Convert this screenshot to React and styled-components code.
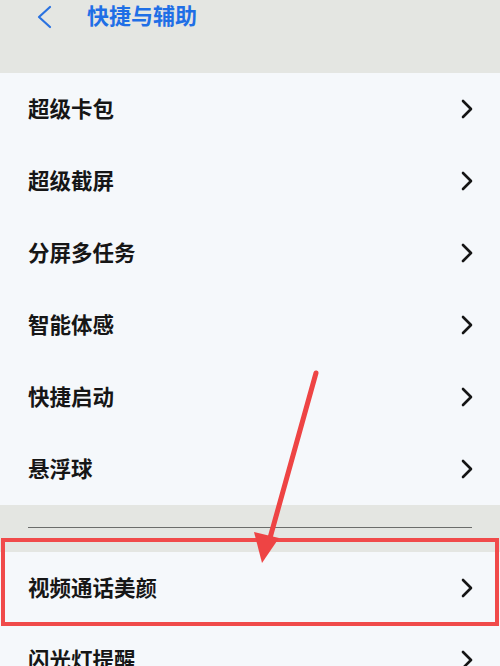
import React from "react";
import styled, { createGlobalStyle } from "styled-components";

const GlobalStyle = createGlobalStyle`
  html, body {
    margin: 0;
    padding: 0;
    background: #e4e6e2;
  }
  body {
    font-family: "Noto Sans CJK SC", "Noto Sans", sans-serif;
  }
`;

const mainItems = ["超级卡包", "超级截屏", "分屏多任务", "智能体感", "快捷启动", "悬浮球"];
const moreItems = ["视频通话美颜", "闪光灯提醒"];

export default function App() {
  return (
    <Page>
      <GlobalStyle />
      <Header>
        <BackButton aria-label="back">
          <svg width="16" height="24" viewBox="0 0 16 24">
            <path d="M14 2 L3 12 L14 22" fill="none" stroke="#2a72e0" strokeWidth="2.2" strokeLinecap="round" strokeLinejoin="round" />
          </svg>
        </BackButton>
        <Title>快捷与辅助</Title>
      </Header>

      <Group>
        {mainItems.map((label) => (
          <Row key={label}>
            <Label>{label}</Label>
            <Chevron />
          </Row>
        ))}
      </Group>

      <Divider>
        <Line />
      </Divider>

      <Group>
        {moreItems.map((label) => (
          <Row key={label}>
            <Label>{label}</Label>
            <Chevron />
          </Row>
        ))}
      </Group>

      {/* annotation layer over the screenshot */}
      <HighlightBox />
      <ArrowLayer width="500" height="666" viewBox="0 0 500 666">
        <line x1="316" y1="373" x2="270" y2="538" stroke="#ee4444" strokeWidth="5" strokeLinecap="round" />
        <polygon points="262,563 254,532 279,538" fill="#ee4444" />
      </ArrowLayer>
    </Page>
  );
}

function Chevron() {
  return (
    <ChevronIcon width="12" height="20" viewBox="0 0 12 20">
      <path d="M2 2 L10 10 L2 18" fill="none" stroke="#151515" strokeWidth="2.6" strokeLinecap="round" strokeLinejoin="round" />
    </ChevronIcon>
  );
}

const Page = styled.div`
  position: relative;
  width: 500px;
  height: 666px;
  overflow: hidden;
  background: #e4e6e2;
`;

const Header = styled.header`
  height: 73px;
  display: flex;
  align-items: flex-start;
  padding: 3px 0 0 36px;
  box-sizing: border-box;
  gap: 33px;
`;

const BackButton = styled.div`
  width: 18px;
  height: 26px;
  display: flex;
  align-items: center;
  margin-top: 1px;
`;

const Title = styled.h1`
  margin: 0;
  font-size: 22px;
  line-height: 26px;
  margin-top: -2px;
  font-weight: 700;
  color: #1f6fe6;
  letter-spacing: 0;
`;

const Group = styled.section`
  background: #f5f8fb;
`;

const Row = styled.div`
  height: 72px;
  display: flex;
  align-items: center;
  justify-content: space-between;
  padding: 0 27px 0 28px;
`;

const Label = styled.span`
  font-size: 21.5px;
  line-height: 28px;
  margin-top: -3px;
  font-weight: 700;
  color: #161616;
`;

const ChevronIcon = styled.svg`
  display: block;
`;

const Divider = styled.div`
  height: 47px;
  display: flex;
  align-items: center;
  padding: 0 28px;
`;

const Line = styled.div`
  flex: 1;
  height: 1.5px;
  background: #6b6d6b;
  margin-top: -2px;
`;

const HighlightBox = styled.div`
  position: absolute;
  left: 1px;
  top: 538px;
  width: 498px;
  height: 88px;
  box-sizing: border-box;
  border: 4px solid #f04a4a;
`;

const ArrowLayer = styled.svg`
  position: absolute;
  left: 0;
  top: 0;
  pointer-events: none;
`;
